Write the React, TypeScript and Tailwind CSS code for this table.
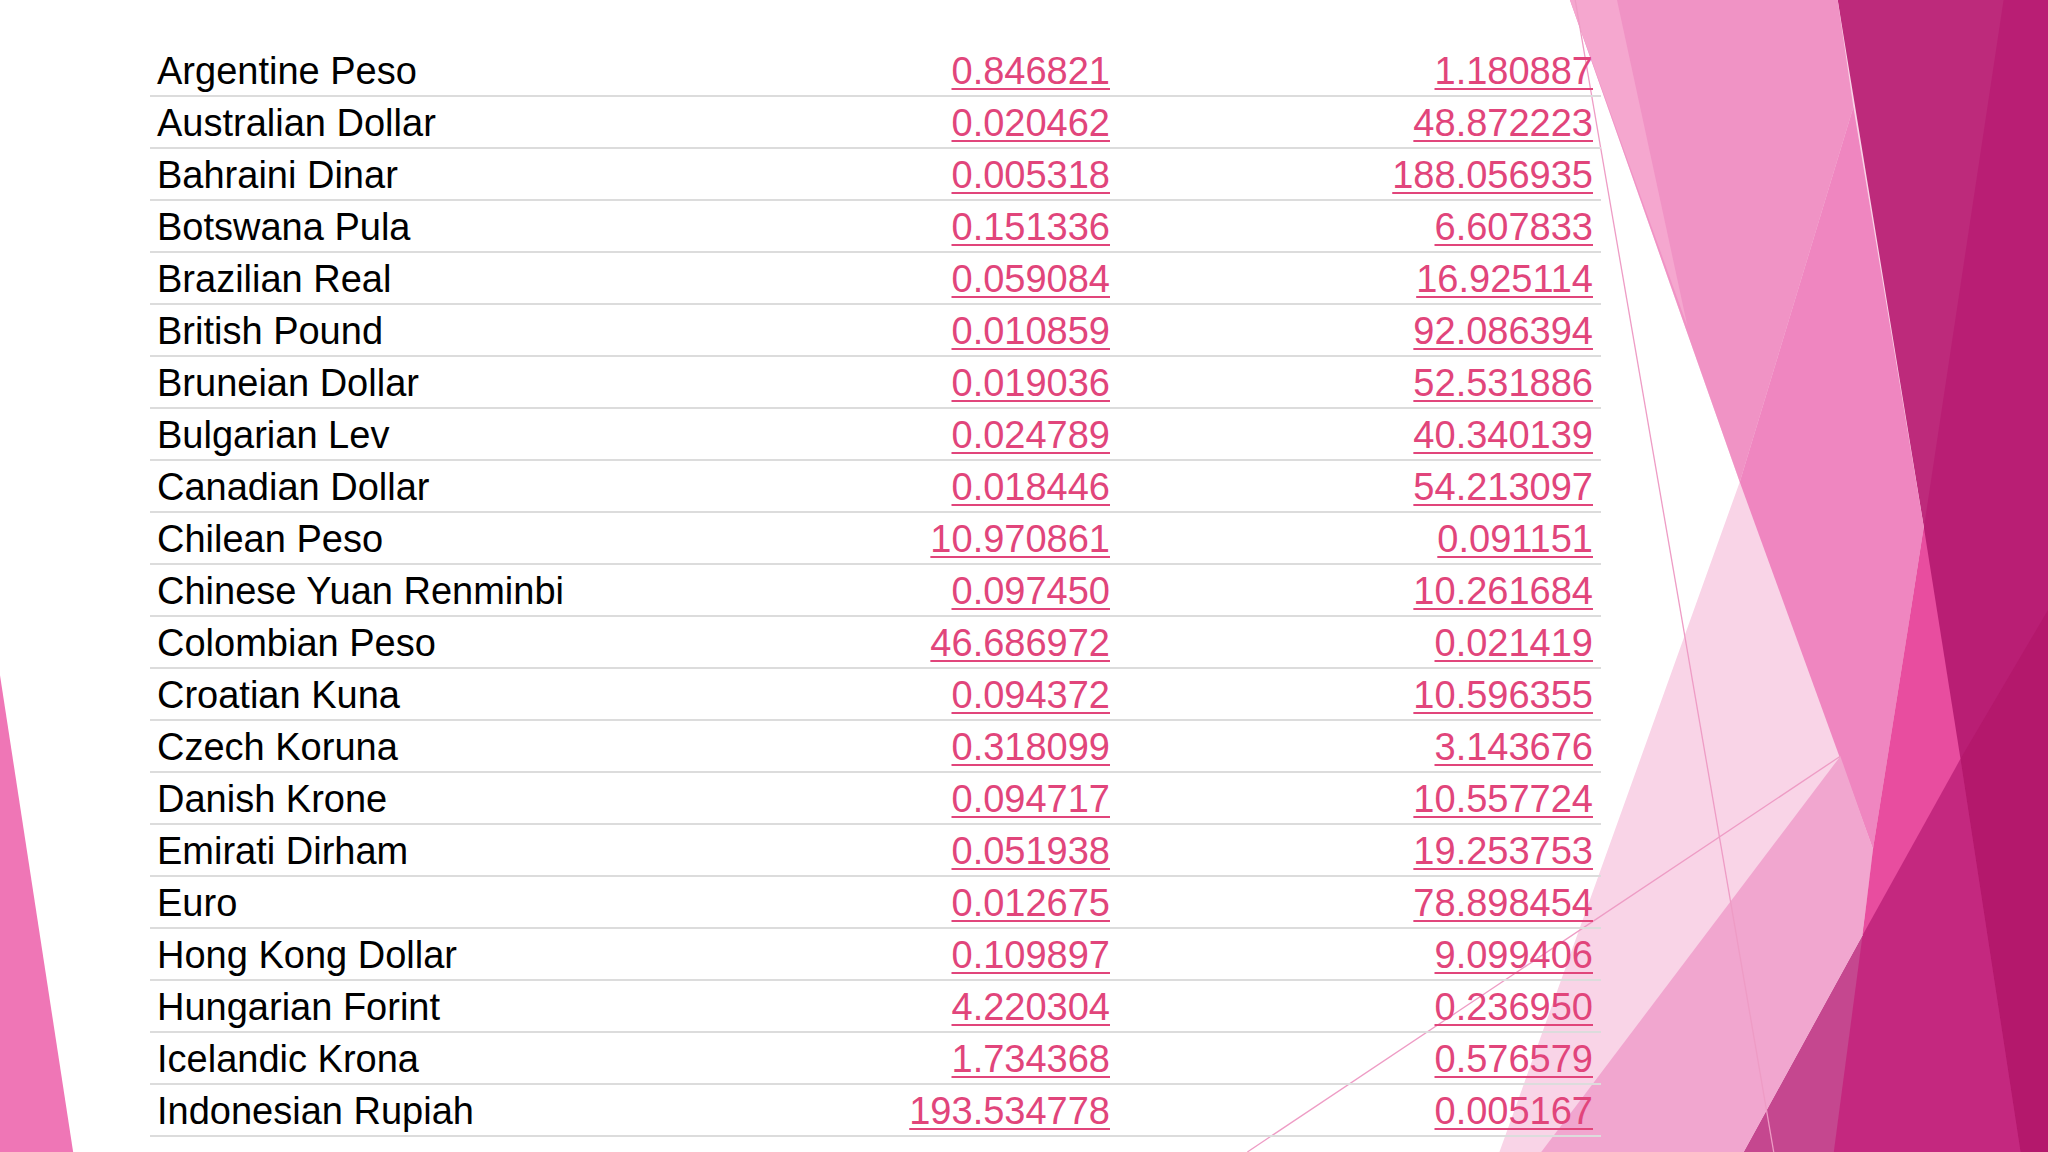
const rates: [string, string, string][] = [
  ["Argentine Peso", "0.846821", "1.180887"],
  ["Australian Dollar", "0.020462", "48.872223"],
  ["Bahraini Dinar", "0.005318", "188.056935"],
  ["Botswana Pula", "0.151336", "6.607833"],
  ["Brazilian Real", "0.059084", "16.925114"],
  ["British Pound", "0.010859", "92.086394"],
  ["Bruneian Dollar", "0.019036", "52.531886"],
  ["Bulgarian Lev", "0.024789", "40.340139"],
  ["Canadian Dollar", "0.018446", "54.213097"],
  ["Chilean Peso", "10.970861", "0.091151"],
  ["Chinese Yuan Renminbi", "0.097450", "10.261684"],
  ["Colombian Peso", "46.686972", "0.021419"],
  ["Croatian Kuna", "0.094372", "10.596355"],
  ["Czech Koruna", "0.318099", "3.143676"],
  ["Danish Krone", "0.094717", "10.557724"],
  ["Emirati Dirham", "0.051938", "19.253753"],
  ["Euro", "0.012675", "78.898454"],
  ["Hong Kong Dollar", "0.109897", "9.099406"],
  ["Hungarian Forint", "4.220304", "0.236950"],
  ["Icelandic Krona", "1.734368", "0.576579"],
  ["Indonesian Rupiah", "193.534778", "0.005167"],
];

// facet-style background, drawn in a 1568x882 space and stretched to the slide
function Backdrop() {
  return (
    <svg
      className="absolute inset-0"
      width="2048"
      height="1152"
      viewBox="0 0 1568 882"
      preserveAspectRatio="none"
    >
      <polygon points="0,517 56,882 0,882" fill="#ef76b6" />

      {/* magenta side, laid down first so the seams stay dark */}
      <polygon points="1395,0 1568,0 1568,882 1320,882 1415,700 1460,404" fill="#b91e74" />
      <polygon points="1395,0 1534,0 1473,404 1460,404" fill="#bd2a7b" />
      <polygon points="1568,467 1568,882 1547,882 1501,581" fill="#b4186c" />
      <polygon points="1501,581 1547,882 1320,882 1415,716" fill="#c4287f" />
      <polygon points="1426,716 1404,882 1320,882" fill="#c5478f" />

      {/* pink facets */}
      <polygon points="1202,0 1407,0 1473,404 1426,716 1335,882 1148,882 1332,369" fill="#f9d4e7" />
      <polygon points="1202,0 1407,0 1419,82 1332,369" fill="#f093c5" />
      <polygon points="1202,0 1238,0 1292,250" fill="#f5a7cf" />
      <polygon points="1419,82 1473,404 1434,650 1332,369" fill="#ef86c0" />
      <polygon points="1409,579 1434,650 1426,716 1335,882 1180,882" fill="#f1a6cf" />
      <polygon points="1473,404 1501,581 1426,716 1434,650" fill="#e84d9f" />

      <line x1="1206" y1="0" x2="1358" y2="882" stroke="#ee9cc5" strokeWidth="1" />
      <line x1="955" y1="882" x2="1409" y2="579" stroke="#ee9cc5" strokeWidth="1" />
    </svg>
  );
}

export default function App() {
  return (
    <div
      className="relative w-[2048px] h-[1152px] overflow-hidden bg-white"
      style={{ fontFamily: '"Liberation Sans", Arial, sans-serif' }}
    >
      <Backdrop />

      <div className="relative pt-[45px] pl-[150px]">
        <div className="w-[1451px]">
          {rates.map(([name, a, b]) => (
            <div
              key={name}
              className="grid grid-cols-[600px_368px_483px] h-[52px] border-b-2 border-[#dcdcdc] pt-[3px] text-[38px] leading-[47px]"
            >
              <span className="pl-[7px] text-black whitespace-nowrap">{name}</span>
              <span className="pr-[8px] text-right">
                <a className="text-[#e1457b] underline decoration-2 underline-offset-4">{a}</a>
              </span>
              <span className="pr-[8px] text-right">
                <a className="text-[#e1457b] underline decoration-2 underline-offset-4">{b}</a>
              </span>
            </div>
          ))}
        </div>
      </div>
    </div>
  );
}
